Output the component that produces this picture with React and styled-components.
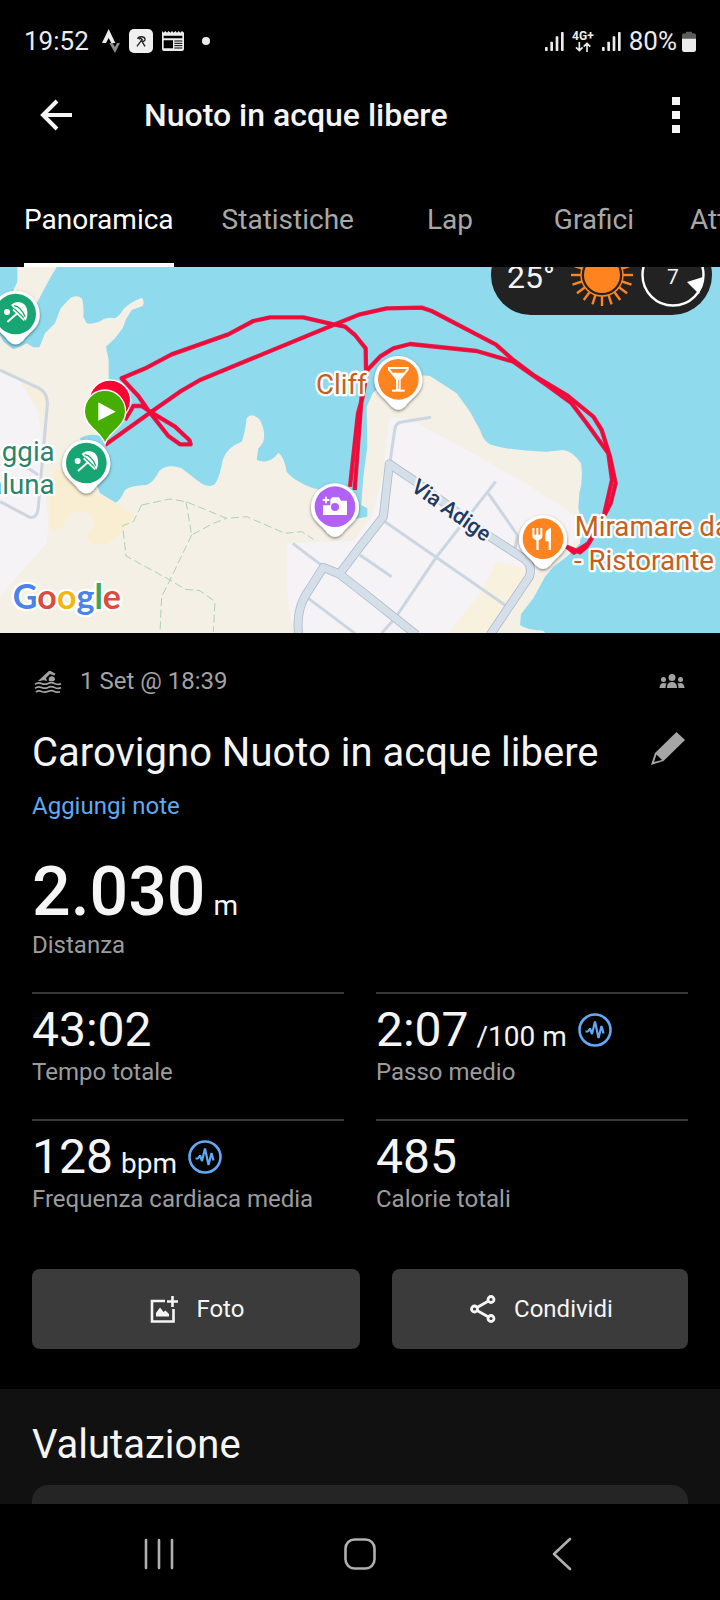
import React, { useState } from 'react'
import styled, { createGlobalStyle } from 'styled-components'

const GlobalStyle = createGlobalStyle`
*{
  box-sizing: border-box;
}
body{
  margin: 0;
  background: #000;
  font-family: Roboto, 'Liberation Sans', sans-serif;
}
h1,h2,p,dl,dt,dd{
  margin: 0;
  font-weight: 400;
}
svg{
  display: block;
  flex: none;
}
button{
  font-family: inherit;
  color: inherit;
  background: none;
  border: none;
  padding: 0;
  cursor: pointer;
}
`

const Screen = styled.div`
height: 100vh;
display: flex;
flex-direction: column;
background: #000;
color: #f5f5f5;
overflow: hidden;
`

const StatusBar = styled.div`
flex: none;
height: 59px;
padding: 23px 24px 0;
display: flex;
justify-content: space-between;
align-items: center;
font-size: 26px;
line-height: 36px;
color: #ececec;
`
const StatusGroup = styled.div`
display: flex;
align-items: center;
gap: ${props => props.$gap}px;
`
const Network = styled.div`
display: flex;
flex-direction: column;
align-items: center;
font-size: 12px;
line-height: 12px;
font-weight: 700;
`
const Battery = styled.div`
display: flex;
align-items: center;
gap: 5px;
`
const Clock = styled.span`
margin-right: 4px;
`
const MoreDot = styled.span`
width: 8px;
height: 8px;
margin-left: 9px;
border-radius: 50%;
background: #ececec;
`

const Header = styled.header`
flex: none;
height: 112px;
padding: 0 32px;
display: flex;
align-items: center;

h1{
  flex: 1;
  padding-left: 64px;
  font-size: 32px;
  line-height: 40px;
  font-weight: 500;
}
`
const IconButton = styled.button`
display: flex;
align-items: center;
justify-content: center;
width: ${props => props.$size || 48}px;
height: ${props => props.$size || 48}px;
`
const MenuButton = styled(IconButton)`
width: 24px;
`

const Tabs = styled.nav`
flex: none;
display: flex;
overflow: hidden;
`
const Tab = styled.button`
flex: none;
min-width: 144px;
height: 96px;
padding: 0 24px;
font-size: 28px;
color: ${props => props.$active ? '#fff' : '#a8a8a8'};

span{
  display: flex;
  align-items: center;
  justify-content: center;
  height: 100%;
  padding-top: 4px;
  border-bottom: 4px solid ${props => props.$active ? '#fff' : 'transparent'};
}
`

const Scroll = styled.main`
flex: 1;
min-height: 0;
overflow: hidden;
`

const MapBox = styled.section`
position: relative;
height: 366px;
overflow: hidden;
background: #90daee;
`
const Weather = styled.div`
position: absolute;
top: -32px;
right: 8px;
height: 80px;
padding: 0 7px 0 16px;
border-radius: 40px;
background: #222;
display: flex;
align-items: center;
gap: 8px;
font-size: 32px;
line-height: 40px;
`
const Degrees = styled.span`
padding-top: 4px;
margin-right: 8px;
`

const Content = styled.section`
padding: 34px 32px 40px;
`
const Row = styled.div`
display: flex;
align-items: center;
justify-content: space-between;
padding-right: 2px;
`
const When = styled.p`
display: flex;
align-items: center;
gap: 18px;
padding-left: 2px;
font-size: 24px;
line-height: 28px;
color: #a3a3a3;
`
const TitleRow = styled(Row)`
align-items: flex-start;
margin-top: 34px;
padding-right: 0;

h2{
  font-size: 40px;
  line-height: 48px;
}
`
const NoteButton = styled.button`
display: block;
margin-top: 15px;
font-size: 24px;
line-height: 28px;
color: #61a8f5;
`

const Stats = styled.dl`
margin-top: 32px;
display: grid;
grid-template-columns: 1fr 1fr;
column-gap: 32px;
row-gap: 33px;
`
const Stat = styled.div`
display: flex;
flex-direction: column-reverse;
grid-column: ${props => props.$main ? '1 / -1' : 'auto'};
padding-top: ${props => props.$main ? 0 : 8}px;
border-top: ${props => props.$main ? 'none' : '2px solid #383838'};

dt{
  font-size: 24px;
  line-height: ${props => props.$main ? 27 : 28}px;
  color: #9c9c9c;
}
dd{
  display: flex;
  align-items: baseline;
  gap: 8px;
  font-size: ${props => props.$main ? 68 : 48}px;
  line-height: ${props => props.$main ? 80 : 56}px;
  font-weight: ${props => props.$main ? 500 : 400};
}
small{
  font-size: 28px;
  line-height: 32px;
  font-weight: 400;
}
`
const PulseButton = styled.button`
align-self: center;
margin-left: 3px;
`

const Actions = styled.div`
margin-top: 56px;
display: flex;
gap: 32px;
`
const Action = styled.button`
flex: ${props => props.$grow} 1 0;
height: 80px;
padding-left: 3px;
border-radius: 8px;
background: #3b3b3b;
display: flex;
align-items: center;
justify-content: center;
gap: 18px;
font-size: 24px;
`

const Rating = styled.section`
padding: 32px 32px 0;
background: #111;

h2{
  font-size: 40px;
  line-height: 48px;
}
`
const RatingCard = styled.div`
margin-top: 16px;
height: 160px;
border-radius: 16px;
background: #252525;
`

const NavBar = styled.nav`
flex: none;
height: 96px;
padding: 4px 57px 0 58px;
display: grid;
grid-template-columns: repeat(3, 1fr);
place-items: center;
`

// status bar icons
const StravaIcon = () => (
  <svg width="18" height="24" viewBox="0 0 54 72">
    <path d="M20 0 40 42H28L20 27 12 42H0Z" fill="#ececec" />
    <path d="M22 42H32L39 54 45 42H54L39 72Z" fill="#8c8c8c" />
  </svg>
)

const RelifeIcon = () => (
  <svg width="24" height="24" viewBox="0 0 72 72">
    <rect width="72" height="72" rx="15" fill="#f0f0f0" />
    <path d="M26 30C27 22 46 20 48 30C49 37 42 38 37 35M24 52 37 34 48 52M30 31C33 27 40 28 40 33" fill="none" stroke="#222" strokeWidth="4" />
  </svg>
)

const NewsIcon = () => (
  <svg width="22" height="20" viewBox="0 0 66 60">
    <path d="M0 0 5 5 10 0 15 5 20 0 25 5 30 0 35 5 40 0 45 5 50 0 55 5 60 0 66 5V54Q66 60 60 60H6Q0 60 0 54Z" fill="#ececec" />
    <path d="M5 14H61V22H5ZM5 28H33V52H5Z" fill="#000" />
    <path d="M37 30H61M37 37H61M37 44H61M37 51H61" stroke="#000" strokeWidth="3" />
  </svg>
)

const SignalIcon = () => (
  <svg width="19" height="19" viewBox="0 0 57 57" fill="#ececec">
    <rect x="0" y="45" width="8" height="12" rx="2" />
    <rect x="16" y="29" width="8" height="28" rx="2" />
    <rect x="32" y="13" width="8" height="44" rx="2" />
    <rect x="48" y="0" width="8" height="57" rx="2" />
  </svg>
)

const DataIcon = () => (
  <svg width="16" height="10" viewBox="0 0 48 30" fill="none" stroke="#ececec" strokeWidth="5">
    <path d="M13 0V26M3 16 13 26 23 16M36 30V4M26 14 36 4 46 14" />
  </svg>
)

const BatteryIcon = () => (
  <svg width="14" height="21" viewBox="0 0 42 63">
    <path d="M12 2H30V7H36Q42 7 42 13V24H0V13Q0 7 6 7H12Z" fill="#5c5c5c" />
    <path d="M0 23H42V56Q42 63 35 63H7Q0 63 0 56Z" fill="#ececec" />
  </svg>
)

// header icons
const BackArrow = () => (
  <svg width="32" height="32" viewBox="0 0 32 32" fill="none" stroke="#f5f5f5" strokeWidth="4">
    <path d="M32 16H3M17 2 3 16 17 30" />
  </svg>
)

const MenuDots = () => (
  <svg width="8" height="36" viewBox="0 0 8 36" fill="#f5f5f5">
    <path d="M0 0H8V8H0ZM0 14H8V22H0ZM0 28H8V36H0Z" />
  </svg>
)

// activity icons
const SwimIcon = () => (
  <svg width="28" height="28" viewBox="0 0 28 28" fill="#a3a3a3">
    <path d="M4 14 14.500 4.200Q15.500 3.600 16.500 4L21.500 6.800 20.300 8.600 16 7 12 11 13 14Q10 13 8 13.500T4 14Z" />
    <path d="M14.800 13.800Q14 10 17.500 9.300 21 9.500 21 12.500L20 14Q17 14.800 14.800 13.800Z" />
    <path d="M1 17.300Q4 14.800 7.500 16.400T14 16.400T20.500 16.400T27 16.800M1 21.300Q4 18.800 7.500 20.400T14 20.400T20.500 20.400T27 20.800M2 25Q4.500 23 7.500 24.400T14 24.400T20.500 24.400T26 24.800" fill="none" stroke="#a3a3a3" strokeWidth="1.700" />
  </svg>
)

const GroupIcon = () => (
  <svg width="28" height="28" viewBox="0 0 28 28" fill="#a3a3a3">
    <circle cx="14" cy="10.500" r="3.500" />
    <circle cx="5.500" cy="12.500" r="2.500" />
    <circle cx="22.500" cy="12.500" r="2.500" />
    <path d="M9 21C9 17 11 15 14 15S19 17 19 21ZM1.500 21C1.500 18 3 16 5.500 16Q7 16 8.500 16.500Q7.500 18.500 7.500 21ZM26.500 21C26.500 18 25 16 22.500 16Q21 16 19.500 16.500Q20.500 18.500 20.500 21Z" />
  </svg>
)

const PencilIcon = () => (
  <svg width="34" height="34" viewBox="0 0 34 34">
    <path d="M25.500 0 34 8 12.500 29 0 33 4 21Z" fill="#a6a6a6" />
    <path d="M5.500 22.500 11 28 3 30Z" fill="#000" />
  </svg>
)

const PulseIcon = () => (
  <svg width="34" height="34" viewBox="0 0 34 34" fill="none" stroke="#61a8f5">
    <circle cx="17" cy="17" r="15.500" strokeWidth="2.600" />
    <path d="M7.500 18.500H10L12 15.500 14 21 17 8.500 20.500 25 23.500 13 25.500 20.500" strokeWidth="2.200" strokeLinejoin="bevel" />
  </svg>
)

const PhotoIcon = () => (
  <svg width="28" height="28" viewBox="0 0 28 28" fill="none" stroke="#f5f5f5" strokeWidth="2.600">
    <path d="M15 6H2V26.500H23.500V14" />
    <path d="M22.500 1V12M17 6.500H28" />
    <path d="M6 21.500V18L10 12.500 13.500 17 15.500 15.500 19 19V21.500Z" fill="#f5f5f5" stroke="none" />
  </svg>
)

const ShareIcon = () => (
  <svg width="26" height="28" viewBox="0 0 26 28" fill="none" stroke="#f5f5f5" strokeWidth="2.800">
    <circle cx="4.500" cy="14" r="3" />
    <circle cx="21" cy="4.500" r="3" />
    <circle cx="21" cy="23.500" r="3" />
    <path d="M7 12.500 18.500 6M7 15.500 18.500 22" />
  </svg>
)

// system navigation icons
const RecentsIcon = () => (
  <svg width="30" height="32" viewBox="0 0 30 32" stroke="#b0b0b0" strokeWidth="2.600" strokeLinecap="round">
    <path d="M2 2V30M15 2V30M28 2V30" />
  </svg>
)

const HomeIcon = () => (
  <svg width="32" height="32" viewBox="0 0 32 32" fill="none" stroke="#b0b0b0" strokeWidth="2.600">
    <rect x="1.500" y="1.500" width="29" height="29" rx="9" />
  </svg>
)

const NavBackIcon = () => (
  <svg width="20" height="34" viewBox="0 0 20 34" fill="none" stroke="#b0b0b0" strokeWidth="2.600" strokeLinecap="round" strokeLinejoin="round">
    <path d="M18 2 2 17 18 32" />
  </svg>
)

const SunIcon = () => (
  <svg width="62" height="62" viewBox="-31 -31 62 62">
    <circle r="18" fill="#ff8420" />
    <circle r="21" fill="none" stroke="#ff8420" strokeWidth="1.500" />
    {Array.from({ length: 20 }, (_, i) => (
      <path key={i} d="M0 21V31" stroke="#ff8420" strokeWidth="2.400" transform={`rotate(${i * 18})`} />
    ))}
  </svg>
)

const WindIcon = () => (
  <svg width="64" height="64" viewBox="-32 -32 64 64">
    <circle r="30.500" fill="none" stroke="#fff" strokeWidth="2.400" />
    <path d="M14 7 30 2 26 19Z" fill="#fff" />
    <text y="9" textAnchor="middle" fontSize="21" fill="#f0f0f0">7</text>
  </svg>
)

// map markers
const Pin = ({ x, y, color, children }) => (
  <g transform={`translate(${x} ${y})`}>
    <path d="M-72 2A72 72 0 1 1 72 2C72 42 42 52 22 80Q0 102 -22 80C-42 52 -72 42 -72 2Z" fill="#fff" filter="url(#pinShadow)" />
    <circle r="61" fill={color} />
    {children}
  </g>
)

const Umbrella = () => (
  <g fill="none" stroke="#fff" strokeWidth="6">
    <circle cx="-26" cy="-6" r="9" fill="#fff" stroke="none" />
    <path d="M-14 -27C4 -44 35 -36 35 -6C36 4 34 12 30 20L22 10 -4 -16Z" fill="#fff" stroke="none" />
    <path d="M-25 24 10 -7" />
    <path d="M-5 -25Q16 -22 28 8M-4 -16 24 11" stroke="#17a673" strokeWidth="4" />
    <path d="M-8 -14 26 19" strokeWidth="5" />
  </g>
)

const Cocktail = () => (
  <g fill="none" stroke="#fff" strokeWidth="6">
    <path d="M-28 -34H28V-29L4 0V31H-4V0L-28 -29Z" />
    <path d="M-18 -20H18L0 2Z" fill="#fff" stroke="none" />
    <path d="M-19 34H19" />
  </g>
)

const Camera = () => (
  <g>
    <path d="M-36 -4H-14V-22L-8 -28H12L18 -18H36V25H-36Z" fill="#fff" />
    <circle cy="1" r="12" fill="#b162f5" />
    <path d="M-27 -30V-10M-37 -20H-17" stroke="#fff" strokeWidth="6" />
  </g>
)

const Cutlery = () => (
  <g fill="#fff">
    <path d="M-32 -32H-26V-12H-20V-32H-14V-12H-8V-32H-2V-8Q-2 2 -13 4V34H-20V4Q-32 2 -32 -8Z" />
    <path d="M24 -32V34H17V8H7V-12Q8 -28 24 -32Z" />
  </g>
)

const TRACK = [
  'M315 555 450 458 540 395 600 360 1000 195 1080 163 1160 145 1265 143 1295 153 1488 254 1540 300 1600 345 1700 405 1780 470 1805 510 1830 590 1847 670 1832 730 1785 820 1760 860 1740 877 1700 860',
  'M1700 860 1722 878 1765 850 1812 765 1836 660 1825 580 1760 490 1715 430 1640 375 1540 305 1430 273 1230 252 1180 265 1140 290 1102 330 1088 410 1074 460 1050 680',
  'M1064 690 1085 410 1098 330 1097 265 1065 225 1035 200 1000 193 910 172 810 172 760 183 685 223 515 283 440 323 365 355 415 408 450 458 505 528 540 553 572 553 568 540 525 500 455 458 425 438 400 438 375 480'
]

const MapLabel = styled.text`
font-size: 83px;
fill: ${props => props.$color};
stroke: #fff;
stroke-width: 14px;
stroke-linejoin: round;
paint-order: stroke;
`
const StreetLabel = styled(MapLabel)`
font-size: 64px;
font-weight: 500;
stroke: #f5f3f5;
`
const BrandLabel = styled(MapLabel)`
font-family: Lato, Roboto, sans-serif;
font-size: 102px;
font-weight: 700;
`

const RouteMap = () => (
  <svg width="100%" height="100%" viewBox="0 21 2160 1098" preserveAspectRatio="xMidYMid slice" role="img" aria-label="Mappa">
    <defs>
      <filter id="pinShadow" x="-30%" y="-30%" width="160%" height="160%">
        <feDropShadow dx="0" dy="4" stdDeviation="5" floodOpacity="0.5" />
      </filter>
    </defs>

    {/* land */}
    <g fill="#f5f0e5">
      <path d="M52 0 52 65 38 95 47 160 100 150 118 115 150 55 172 18 172 0Z" />
      <path d="M0 225 10 245 40 268 65 258 80 250 100 262 118 262 135 220 165 190 182 145 210 115Q230 102 245 115Q252 130 250 170L260 190Q285 195 310 178 325 170 345 175 362 165 370 148 385 130 425 113 435 120 428 138L395 150 378 178 368 205 345 235 318 260 326 300 326 380 318 470 300 527Q265 518 240 535L262 600 300 700 345 727Q358 728 375 690 390 676 440 675 462 665 478 632 505 610 545 625L590 660Q625 688 645 672 660 650 668 600 682 560 725 545 735 520 740 475 755 455 780 480 798 515 790 545 780 560 775 565L770 600Q800 612 825 590L835 578Q852 588 860 635 880 662 940 685L1010 700 1050 780 1102 770 1102 745 1084 735 1090 650 1102 560 1100 440 1118 400 1150 370 1200 340 1290 348 1370 400 1410 455 1440 510Q1452 548 1475 555 1530 572 1640 575L1690 570Q1720 575 1743 610 1750 660 1738 700L1735 745 1745 790 1740 850 1700 890 1660 920 1635 950 1600 1015 1563 1062 1560 1095Q1580 1110 1630 1112L1640 1125H0Z" />
    </g>
    <path d="M60 365 145 405 140 480 110 440Z" fill="#f7efdd" />
    <path d="M170 620 262 690 345 728 400 765 395 785 350 830Q310 865 272 850L262 830 285 790Q275 755 240 752 200 755 190 800L165 812 150 800 145 700Z" fill="#faeed2" />
    <path d="M0 330 62 365 110 450 135 560 130 640 145 790 140 850 60 940 0 1010ZM862 850 1062 842 1115 770 1150 640 1168 470 1230 478 1400 570 1560 660 1700 750 1745 790 1738 830 1620 920 1480 1120H880L862 1000Z" fill="#f5f3f5" />
    <path d="M1490 905 1590 930 1590 960 1480 1120H1345L1440 1000Z" fill="#f8f1de" />

    {/* footpaths */}
    <g fill="none" stroke="#aad0b8" strokeWidth="3" strokeDasharray="24 11">
      <path d="M425 735 510 717 558 725 680 775 740 770 855 820 905 815 940 838" />
      <path d="M558 725 575 825 640 790 680 775" />
      <path d="M425 735 400 785 368 797 378 888 510 960 555 988 600 992 645 1025 640 1116" />
      <path d="M575 825 510 960 485 1010 480 1116" />
    </g>

    {/* roads */}
    <g fill="none" stroke="#cbd6e1" strokeWidth="9" strokeLinejoin="round">
      <path d="M0 330 118 385Q144 400 142 435L115 740Q113 776 90 772L0 725M55 605 115 645" />
      <path d="M1170 605 1185 505Q1190 487 1205 486L1293 472M1155 785 1515 1035M1487 665 1310 890 1185 1075 1145 1120M1465 700 1552 825 1545 870M878 850 970 920M925 1015 1065 1120M1080 885 1175 950M1310 720 1380 760" />
    </g>
    {[['#aebccb', 27], ['#d4dfe9', 22]].map(([color, width]) => (
      <path
        key={color}
        d="M896 1125C888 1060 905 1020 930 985L970 922 1018 942 1080 990 1250 1125M1018 942 1080 860 1150 770 1168 612 1250 667 1470 830 1570 895Q1600 915 1588 950L1470 1125"
        fill="none"
        stroke={color}
        strokeWidth={width}
        strokeLinejoin="round"
      />
    ))}

    {/* swim track */}
    <g fill="none" strokeLinejoin="round">
      {TRACK.map(d => <path key={d} d={d} stroke="#d42850" strokeWidth="13" />)}
      {TRACK.map(d => <path key={d} d={d} stroke="#f4083a" strokeWidth="8" />)}
    </g>

    <MapLabel $color="#c4601c" x="948" y="402">Cliff</MapLabel>
    <MapLabel $color="#c4601c" x="1724" y="828">Miramare da</MapLabel>
    <MapLabel $color="#c4601c" x="1722" y="930">- Ristorante</MapLabel>
    <MapLabel $color="#2a8468" x="164" y="602" textAnchor="end">ggia</MapLabel>
    <MapLabel $color="#2a8468" x="164" y="702" textAnchor="end">aluna</MapLabel>
    <StreetLabel $color="#1d3b5f" transform="translate(1230 690) rotate(35)">Via Adige</StreetLabel>

    <Pin x="47" y="162" color="#17a673"><Umbrella /></Pin>
    <g stroke="#fff" strokeWidth="4">
      <path d="M330 525C315 480 268 465 268 422A62 62 0 0 1 392 422C392 465 345 480 330 525Z" fill="#fb0234" />
      <path d="M315 552C305 515 253 500 253 455A62 65 0 0 1 377 455C377 500 325 515 315 552Z" fill="#46ae00" />
      <path d="M295 427 347 455 295 482Z" fill="#fff" stroke="none" />
    </g>
    <Pin x="259" y="609" color="#17a673"><Umbrella /></Pin>
    <Pin x="1005" y="740" color="#b162f5"><Camera /></Pin>
    <Pin x="1195" y="358" color="#ff8420"><Cocktail /></Pin>
    <Pin x="1629" y="836" color="#ff8420"><Cutlery /></Pin>

    <BrandLabel x="38" y="1046">
      <tspan fill="#4a83ec">G</tspan>
      <tspan fill="#dd4a3e">o</tspan>
      <tspan fill="#f2b60e">o</tspan>
      <tspan fill="#4a83ec">g</tspan>
      <tspan fill="#3aa757">l</tspan>
      <tspan fill="#dd4a3e">e</tspan>
    </BrandLabel>
  </svg>
)

const TABS = ['Panoramica', 'Statistiche', 'Lap', 'Grafici', 'Attrezzatura']

const STATS = [
  { label: 'Distanza', value: '2.030', unit: 'm', main: true },
  { label: 'Tempo totale', value: '43:02' },
  { label: 'Passo medio', value: '2:07', unit: '/100 m', pulse: true },
  { label: 'Frequenza cardiaca media', value: '128', unit: 'bpm', pulse: true },
  { label: 'Calorie totali', value: '485' }
]

const App = () => {
  const [tab, setTab] = useState('Panoramica')

  return (
    <Screen>
      <GlobalStyle />
      <StatusBar>
        <StatusGroup $gap={9}>
          <Clock>19:52</Clock>
          <StravaIcon />
          <RelifeIcon />
          <NewsIcon />
          <MoreDot />
        </StatusGroup>
        <StatusGroup $gap={8}>
          <SignalIcon />
          <Network>4G+<DataIcon /></Network>
          <SignalIcon />
          <Battery>80%<BatteryIcon /></Battery>
        </StatusGroup>
      </StatusBar>

      <Header>
        <IconButton aria-label="Indietro"><BackArrow /></IconButton>
        <h1>Nuoto in acque libere</h1>
        <MenuButton aria-label="Altre opzioni"><MenuDots /></MenuButton>
      </Header>

      <Tabs>
        {TABS.map(name => (
          <Tab key={name} $active={name === tab} onClick={() => setTab(name)}>
            <span>{name}</span>
          </Tab>
        ))}
      </Tabs>

      <Scroll>
        <MapBox>
          <RouteMap />
          <Weather>
            <Degrees>25°</Degrees>
            <SunIcon />
            <WindIcon />
          </Weather>
        </MapBox>

        <Content>
          <Row>
            <When><SwimIcon />1 Set @ 18:39</When>
            <GroupIcon />
          </Row>
          <TitleRow>
            <h2>Carovigno Nuoto in acque libere</h2>
            <IconButton $size={40} aria-label="Modifica"><PencilIcon /></IconButton>
          </TitleRow>
          <NoteButton>Aggiungi note</NoteButton>

          <Stats>
            {STATS.map(s => (
              <Stat key={s.label} $main={s.main}>
                <dt>{s.label}</dt>
                <dd>
                  {s.value}
                  {s.unit && <small>{s.unit}</small>}
                  {s.pulse && <PulseButton aria-label="Mostra grafico"><PulseIcon /></PulseButton>}
                </dd>
              </Stat>
            ))}
          </Stats>

          <Actions>
            <Action $grow={328}><PhotoIcon />Foto</Action>
            <Action $grow={296}><ShareIcon />Condividi</Action>
          </Actions>
        </Content>

        <Rating>
          <h2>Valutazione</h2>
          <RatingCard />
        </Rating>
      </Scroll>

      <NavBar>
        <IconButton aria-label="Recenti"><RecentsIcon /></IconButton>
        <IconButton aria-label="Home"><HomeIcon /></IconButton>
        <IconButton aria-label="Torna indietro"><NavBackIcon /></IconButton>
      </NavBar>
    </Screen>
  )
}

export default App
